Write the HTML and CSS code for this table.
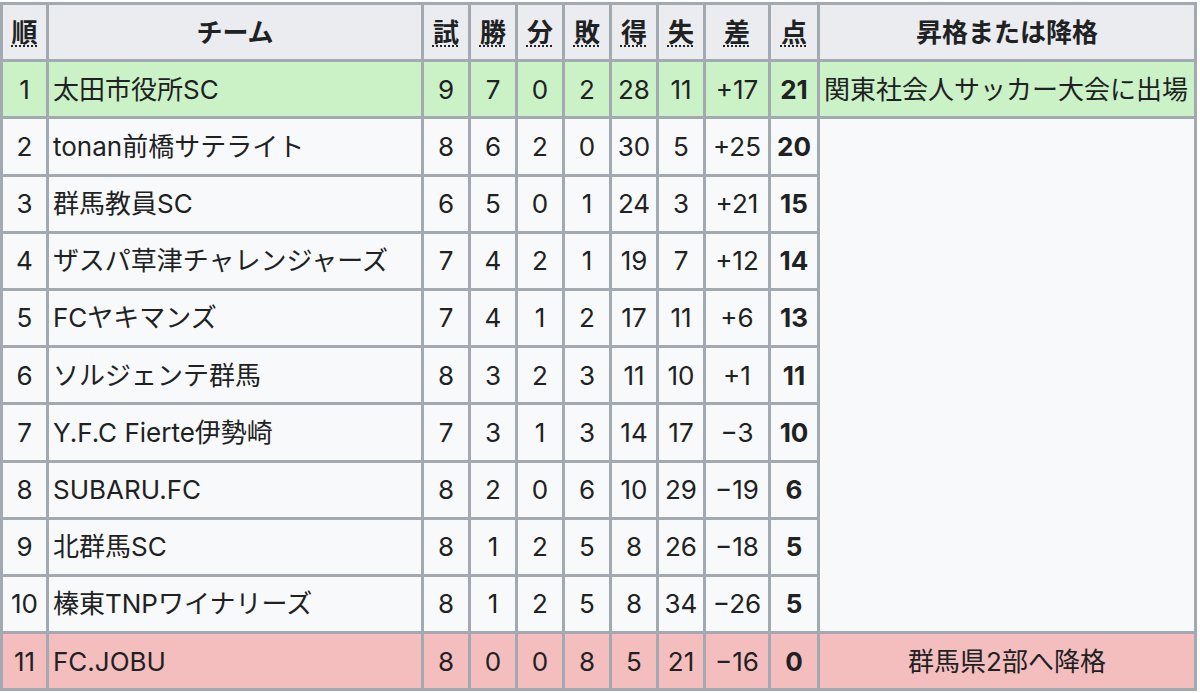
FILE: index.html
```html
<!DOCTYPE html>
<html lang="ja">
<head>
<meta charset="utf-8">
<title>順位表</title>
<link rel="stylesheet" href="styles.css">
</head>
<body>
<table class="standings">
  <colgroup>
    <col class="c-pos">
    <col class="c-team">
    <col class="c-num">
    <col class="c-num">
    <col class="c-num">
    <col class="c-num">
    <col class="c-num">
    <col class="c-num">
    <col class="c-diff">
    <col class="c-pts">
    <col class="c-note">
  </colgroup>
  <thead>
    <tr>
      <th><abbr title="順位">順</abbr></th>
      <th>チーム</th>
      <th><abbr title="試合数">試</abbr></th>
      <th><abbr title="勝利">勝</abbr></th>
      <th><abbr title="引分">分</abbr></th>
      <th><abbr title="敗戦">敗</abbr></th>
      <th><abbr title="得点">得</abbr></th>
      <th><abbr title="失点">失</abbr></th>
      <th><abbr title="得失点差">差</abbr></th>
      <th><abbr title="勝点">点</abbr></th>
      <th>昇格または降格</th>
    </tr>
  </thead>
  <tbody>
    <tr class="promo">
      <td class="num">1</td><td class="team">太田市役所SC</td>
      <td class="num">9</td><td class="num">7</td><td class="num">0</td><td class="num">2</td><td class="num">28</td><td class="num">11</td><td class="num">+17</td><td class="num pts">21</td>
      <td class="note">関東社会人サッカー大会に出場</td>
    </tr>
    <tr>
      <td class="num">2</td><td class="team">tonan前橋サテライト</td>
      <td class="num">8</td><td class="num">6</td><td class="num">2</td><td class="num">0</td><td class="num">30</td><td class="num">5</td><td class="num">+25</td><td class="num pts">20</td>
      <td class="note" rowspan="9"></td>
    </tr>
    <tr>
      <td class="num">3</td><td class="team">群馬教員SC</td>
      <td class="num">6</td><td class="num">5</td><td class="num">0</td><td class="num">1</td><td class="num">24</td><td class="num">3</td><td class="num">+21</td><td class="num pts">15</td>
    </tr>
    <tr>
      <td class="num">4</td><td class="team">ザスパ草津チャレンジャーズ</td>
      <td class="num">7</td><td class="num">4</td><td class="num">2</td><td class="num">1</td><td class="num">19</td><td class="num">7</td><td class="num">+12</td><td class="num pts">14</td>
    </tr>
    <tr>
      <td class="num">5</td><td class="team">FCヤキマンズ</td>
      <td class="num">7</td><td class="num">4</td><td class="num">1</td><td class="num">2</td><td class="num">17</td><td class="num">11</td><td class="num">+6</td><td class="num pts">13</td>
    </tr>
    <tr>
      <td class="num">6</td><td class="team">ソルジェンテ群馬</td>
      <td class="num">8</td><td class="num">3</td><td class="num">2</td><td class="num">3</td><td class="num">11</td><td class="num">10</td><td class="num">+1</td><td class="num pts">11</td>
    </tr>
    <tr>
      <td class="num">7</td><td class="team">Y.F.C Fierte伊勢崎</td>
      <td class="num">7</td><td class="num">3</td><td class="num">1</td><td class="num">3</td><td class="num">14</td><td class="num">17</td><td class="num">−3</td><td class="num pts">10</td>
    </tr>
    <tr>
      <td class="num">8</td><td class="team">SUBARU.FC</td>
      <td class="num">8</td><td class="num">2</td><td class="num">0</td><td class="num">6</td><td class="num">10</td><td class="num">29</td><td class="num">−19</td><td class="num pts">6</td>
    </tr>
    <tr>
      <td class="num">9</td><td class="team">北群馬SC</td>
      <td class="num">8</td><td class="num">1</td><td class="num">2</td><td class="num">5</td><td class="num">8</td><td class="num">26</td><td class="num">−18</td><td class="num pts">5</td>
    </tr>
    <tr>
      <td class="num">10</td><td class="team">榛東TNPワイナリーズ</td>
      <td class="num">8</td><td class="num">1</td><td class="num">2</td><td class="num">5</td><td class="num">8</td><td class="num">34</td><td class="num">−26</td><td class="num pts">5</td>
    </tr>
    <tr class="releg">
      <td class="num">11</td><td class="team">FC.JOBU</td>
      <td class="num">8</td><td class="num">0</td><td class="num">0</td><td class="num">8</td><td class="num">5</td><td class="num">21</td><td class="num">−16</td><td class="num pts">0</td>
      <td class="note center">群馬県2部へ降格</td>
    </tr>
  </tbody>
</table>
</body>
</html>
```

FILE: styles.css
```css
html, body {
  background: #ffffff;
}
body {
  margin: 2px 0 0 0;
  font-family: Inter, "Noto Sans CJK JP", sans-serif;
  font-size: 26px;
  color: #202122;
}
.standings {
  border-collapse: collapse;
  table-layout: fixed;
  width: 1197px;
  border: 3px solid #a2a9b1;
  background: #f8f9fa;
}
.c-pos { width: 46px; }
.c-team { width: 375px; }
.c-num { width: 47px; }
.c-diff { width: 65px; }
.c-pts { width: 49px; }
.c-note { width: 377px; }
.standings th,
.standings td {
  border: 3px solid #a2a9b1;
  padding: 0 4px;
  height: 57.2px;
  box-sizing: border-box;
  vertical-align: middle;
  white-space: nowrap;
  overflow: hidden;
  line-height: 1.2;
}
.standings th {
  background: #eaecf0;
  font-weight: bold;
  text-align: center;
}
.standings abbr {
  text-decoration: underline dotted;
  text-underline-offset: 4px;
  text-decoration-thickness: 2px;
}
.num {
  text-align: center;
  padding: 0 2px;
}
.standings td.num { padding: 0 1px; }
.team { text-align: left; }
.pts { font-weight: bold; }
.note { text-align: left; }
.note.center { text-align: center; }
.promo td { background: #cbf1c7; }
.releg td { background: #f4bebe; }
```
